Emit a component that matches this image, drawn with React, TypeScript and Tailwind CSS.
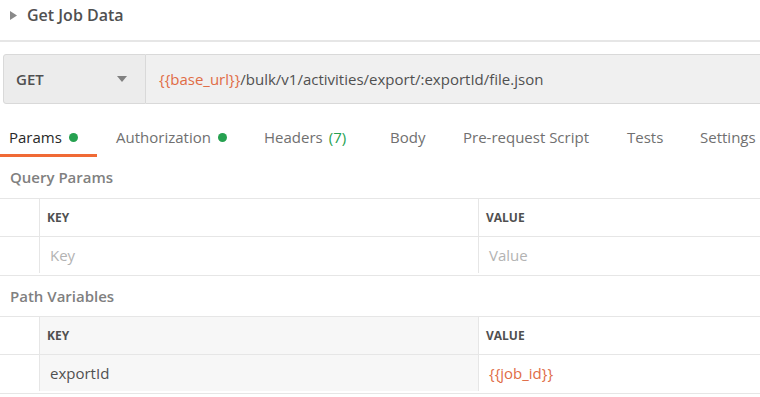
import type { ReactNode } from "react";

const font = { fontFamily: '"Open Sans", "Liberation Sans", sans-serif' };

const tabs = [
  { label: "Params", width: "w-[97px] pl-[9px]", dot: true, active: true },
  { label: "Authorization", width: "ml-[19px] w-[148px]", dot: true },
  { label: "Headers", width: "w-[126px]", count: "(7)" },
  { label: "Body", width: "w-[73px]" },
  { label: "Pre-request Script", width: "w-[164px]" },
  { label: "Tests", width: "w-[73px]" },
  { label: "Settings", width: "w-[80px]" }
];

function SectionTitle({ children, tall }: { children: ReactNode; tall?: boolean }) {
  return (
    <div
      className={`flex items-center pl-[10px] text-[15px] font-semibold text-[#808080] ${
        tall ? "h-[41px]" : "h-[40px]"
      }`}
    >
      {children}
    </div>
  );
}

function Row({
  keyCell,
  valueCell,
  shadeKey,
  header
}: {
  keyCell: ReactNode;
  valueCell: ReactNode;
  shadeKey?: boolean;
  header?: boolean;
}) {
  return (
    <div className={`flex border-b border-[#e6e6e6] ${header ? "h-[38px]" : "h-[39px] pb-[2px]"}`}>
      <div className="w-[40px] shrink-0 border-r border-[#e6e6e6]" />
      <div
        className={`flex w-[439px] shrink-0 items-center border-r border-[#e6e6e6] ${
          header ? "pl-[7px]" : "pl-[10px]"
        } ${shadeKey ? "bg-[#f7f7f7]" : ""}`}
      >
        {keyCell}
      </div>
      <div className={`flex flex-1 items-center ${header ? "pl-[7px]" : "pl-[10px]"}`}>
        {valueCell}
      </div>
    </div>
  );
}

function HeaderLabel({ children }: { children: ReactNode }) {
  return <span className="text-[12px] font-bold text-[#505050]">{children}</span>;
}

export default function App() {
  return (
    <div style={font} className="h-[397px] w-[760px] overflow-hidden bg-white text-[#505050]">
      <div className="flex h-[40px] items-center pb-[10px] pl-[10px]">
        <svg width="7" height="9" viewBox="0 0 7 9" className="mr-[10px]">
          <path d="M0 0 L7 4.5 L0 9 Z" fill="#8a8a8a" />
        </svg>
        <span className="text-[16px] font-semibold text-[#505050]">Get Job Data</span>
      </div>
      <div className="h-[2px] bg-[#e6e6e6]" />

      <div className="mt-[12px] flex h-[50px] pl-[3px]">
        <div className="flex w-[143px] items-center justify-between rounded-l-[3px] border border-[#d9d9d9] bg-[#ececec] pl-[12px] pr-[18px]">
          <span className="text-[15px] font-semibold text-[#505050]">GET</span>
          <svg width="10" height="6" viewBox="0 0 10 6">
            <path d="M0 0 L10 0 L5 6 Z" fill="#808080" />
          </svg>
        </div>
        <div className="flex flex-1 items-center border-y border-[#d9d9d9] bg-[#f0f0f0] pl-[13px] text-[15px]">
          <span className="text-[#e06c45]">{"{{base_url}}"}</span>
          <span className="text-[#505050]">/bulk/v1/activities/export/:exportId/file.json</span>
        </div>
      </div>

      <div className="mt-[14px] flex h-[39px]">
        {tabs.map((tab) => (
          <div
            key={tab.label}
            className={`flex shrink-0 items-center whitespace-nowrap pt-[3px] text-[15px] ${tab.width} ${
              tab.active
                ? "border-b-[3px] border-[#f06a35] text-[#282828]"
                : "pb-[3px] text-[#707070]"
            }`}
          >
            {tab.label}
            {tab.dot ? (
              <span className="ml-[7px] inline-block h-[9px] w-[9px] rounded-full bg-[#26a150]" />
            ) : null}
            {tab.count ? <span className="ml-[6px] text-[#26a150]">{tab.count}</span> : null}
          </div>
        ))}
      </div>

      <SectionTitle tall>Query Params</SectionTitle>
      <div className="border-t border-[#e6e6e6]">
        <Row header keyCell={<HeaderLabel>KEY</HeaderLabel>} valueCell={<HeaderLabel>VALUE</HeaderLabel>} />
        <Row
          keyCell={<span className="text-[15px] text-[#b3b3b3]">Key</span>}
          valueCell={<span className="text-[15px] text-[#b3b3b3]">Value</span>}
        />
      </div>

      <SectionTitle>Path Variables</SectionTitle>
      <div className="border-t border-[#e6e6e6]">
        <Row
          header
          shadeKey
          keyCell={<HeaderLabel>KEY</HeaderLabel>}
          valueCell={<HeaderLabel>VALUE</HeaderLabel>}
        />
        <Row
          shadeKey
          keyCell={<span className="text-[15px] text-[#505050]">exportId</span>}
          valueCell={<span className="text-[15px] text-[#e06c45]">{"{{job_id}}"}</span>}
        />
      </div>
    </div>
  );
}
